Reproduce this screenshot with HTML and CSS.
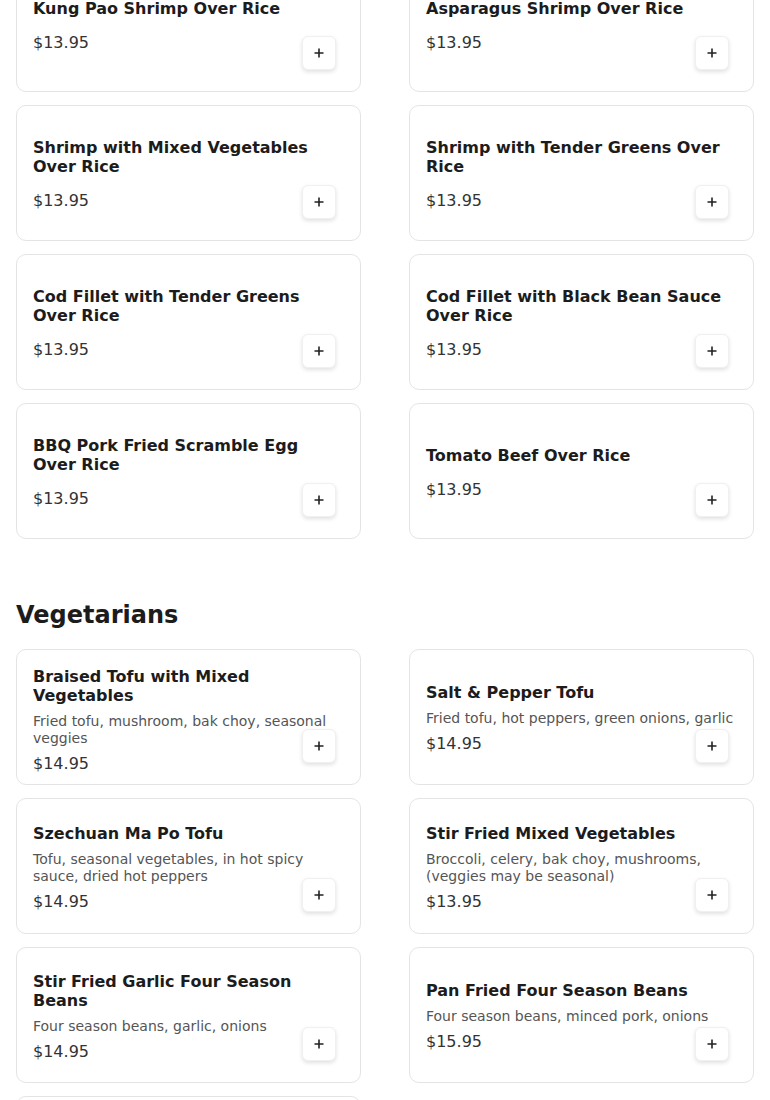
FILE: index.html
```html
<!DOCTYPE html>
<html lang="en">
<head>
<meta charset="UTF-8">
<meta name="viewport" content="width=device-width, initial-scale=1.0">
<title>Menu</title>
<link rel="stylesheet" href="styles.css">
</head>
<body>
  <main class="menu">
    <!-- Over Rice -->
    <section class="section section-rice">
      <div class="grid">
        <div class="card">
          <div class="info">
            <h3 class="name">Kung Pao Shrimp Over Rice</h3>
            <div class="price">$13.95</div>
          </div>
          <button class="add" aria-label="Add"><svg viewBox="0 0 10 10"><path d="M5 0.5v9M0.5 5h9"/></svg></button>
        </div>
        <div class="card">
          <div class="info">
            <h3 class="name">Asparagus Shrimp Over Rice</h3>
            <div class="price">$13.95</div>
          </div>
          <button class="add" aria-label="Add"><svg viewBox="0 0 10 10"><path d="M5 0.5v9M0.5 5h9"/></svg></button>
        </div>
        <div class="card">
          <div class="info">
            <h3 class="name">Shrimp with Mixed Vegetables Over Rice</h3>
            <div class="price">$13.95</div>
          </div>
          <button class="add" aria-label="Add"><svg viewBox="0 0 10 10"><path d="M5 0.5v9M0.5 5h9"/></svg></button>
        </div>
        <div class="card">
          <div class="info">
            <h3 class="name">Shrimp with Tender Greens Over Rice</h3>
            <div class="price">$13.95</div>
          </div>
          <button class="add" aria-label="Add"><svg viewBox="0 0 10 10"><path d="M5 0.5v9M0.5 5h9"/></svg></button>
        </div>
        <div class="card">
          <div class="info">
            <h3 class="name">Cod Fillet with Tender Greens Over Rice</h3>
            <div class="price">$13.95</div>
          </div>
          <button class="add" aria-label="Add"><svg viewBox="0 0 10 10"><path d="M5 0.5v9M0.5 5h9"/></svg></button>
        </div>
        <div class="card">
          <div class="info">
            <h3 class="name">Cod Fillet with Black Bean Sauce Over Rice</h3>
            <div class="price">$13.95</div>
          </div>
          <button class="add" aria-label="Add"><svg viewBox="0 0 10 10"><path d="M5 0.5v9M0.5 5h9"/></svg></button>
        </div>
        <div class="card">
          <div class="info">
            <h3 class="name">BBQ Pork Fried Scramble Egg Over Rice</h3>
            <div class="price">$13.95</div>
          </div>
          <button class="add" aria-label="Add"><svg viewBox="0 0 10 10"><path d="M5 0.5v9M0.5 5h9"/></svg></button>
        </div>
        <div class="card">
          <div class="info">
            <h3 class="name">Tomato Beef Over Rice</h3>
            <div class="price">$13.95</div>
          </div>
          <button class="add" aria-label="Add"><svg viewBox="0 0 10 10"><path d="M5 0.5v9M0.5 5h9"/></svg></button>
        </div>
      </div>
    </section>

    <!-- Vegetarians -->
    <section class="section">
      <h2 class="section-title">Vegetarians</h2>
      <div class="grid">
        <div class="card">
          <div class="info">
            <h3 class="name">Braised Tofu with Mixed Vegetables</h3>
            <p class="desc">Fried tofu, mushroom, bak choy, seasonal veggies</p>
            <div class="price">$14.95</div>
          </div>
          <button class="add" aria-label="Add"><svg viewBox="0 0 10 10"><path d="M5 0.5v9M0.5 5h9"/></svg></button>
        </div>
        <div class="card">
          <div class="info">
            <h3 class="name">Salt &amp; Pepper Tofu</h3>
            <p class="desc">Fried tofu, hot peppers, green onions, garlic</p>
            <div class="price">$14.95</div>
          </div>
          <button class="add" aria-label="Add"><svg viewBox="0 0 10 10"><path d="M5 0.5v9M0.5 5h9"/></svg></button>
        </div>
        <div class="card">
          <div class="info">
            <h3 class="name">Szechuan Ma Po Tofu</h3>
            <p class="desc">Tofu, seasonal vegetables, in hot spicy sauce, dried hot peppers</p>
            <div class="price">$14.95</div>
          </div>
          <button class="add" aria-label="Add"><svg viewBox="0 0 10 10"><path d="M5 0.5v9M0.5 5h9"/></svg></button>
        </div>
        <div class="card">
          <div class="info">
            <h3 class="name">Stir Fried Mixed Vegetables</h3>
            <p class="desc">Broccoli, celery, bak choy, mushrooms, (veggies may be seasonal)</p>
            <div class="price">$13.95</div>
          </div>
          <button class="add" aria-label="Add"><svg viewBox="0 0 10 10"><path d="M5 0.5v9M0.5 5h9"/></svg></button>
        </div>
        <div class="card">
          <div class="info">
            <h3 class="name">Stir Fried Garlic Four Season Beans</h3>
            <p class="desc">Four season beans, garlic, onions</p>
            <div class="price">$14.95</div>
          </div>
          <button class="add" aria-label="Add"><svg viewBox="0 0 10 10"><path d="M5 0.5v9M0.5 5h9"/></svg></button>
        </div>
        <div class="card">
          <div class="info">
            <h3 class="name">Pan Fried Four Season Beans</h3>
            <p class="desc">Four season beans, minced pork, onions</p>
            <div class="price">$15.95</div>
          </div>
          <button class="add" aria-label="Add"><svg viewBox="0 0 10 10"><path d="M5 0.5v9M0.5 5h9"/></svg></button>
        </div>
        <div class="card">
          <div class="info">
            <h3 class="name">Eggplant with Garlic Sauce</h3>
            <p class="desc">Chinese eggplant, garlic, green onions</p>
            <div class="price">$14.95</div>
          </div>
          <button class="add" aria-label="Add"><svg viewBox="0 0 10 10"><path d="M5 0.5v9M0.5 5h9"/></svg></button>
        </div>
      </div>
    </section>
  </main>
</body>
</html>
```

FILE: styles.css
```css
body {
  font-family: "DejaVu Sans", Verdana, sans-serif;
  margin: 0;
  padding: 0 16px;
  background: #fff;
  color: #1c1c1c;
}

/* ページはスクロール途中の状態 */
.menu {
  margin-top: -44px;
}

.section + .section {
  margin-top: 62px;
}
.section-title {
  font-size: 24px;
  line-height: 28px;
  font-weight: bold;
  margin: 0 0 20px;
  color: #1c1c1c;
}

.grid {
  display: grid;
  grid-template-columns: 1fr 1fr;
  column-gap: 48px;
  row-gap: 13px;
}

.card {
  display: grid;
  grid-template-rows: minmax(0, 1fr);
  height: 136px;
  box-sizing: border-box;
  padding: 17px 16px 15px;
  border: 1px solid #e4e4e4;
  border-radius: 10px;
  background: #fff;
}
.info {
  grid-area: 1 / 1;
  align-self: safe center;
}
.name {
  font-size: 16px;
  line-height: 19px;
  font-weight: bold;
  margin: 0 0 8px;
  color: #1c1c1c;
}
.desc {
  font-size: 14px;
  line-height: 17px;
  margin: 0;
  color: #555;
}
.price {
  font-size: 16px;
  line-height: 19px;
  margin-top: 7px;
  color: #333;
}
.name + .price {
  margin-top: 15px;
}

/* 追加ボタン */
.add {
  grid-area: 1 / 1;
  justify-self: end;
  align-self: end;
  display: flex;
  align-items: center;
  justify-content: center;
  width: 34px;
  height: 34px;
  margin: 0 8px 6px 0;
  padding: 0;
  border: 1px solid #f0f0f0;
  border-radius: 6px;
  background: #fff;
  box-shadow: 0 2px 4px rgba(0, 0, 0, 0.12);
  cursor: pointer;
}
.add svg {
  width: 10px;
  height: 10px;
  fill: none;
  stroke: #222;
  stroke-width: 1.6;
}
```
